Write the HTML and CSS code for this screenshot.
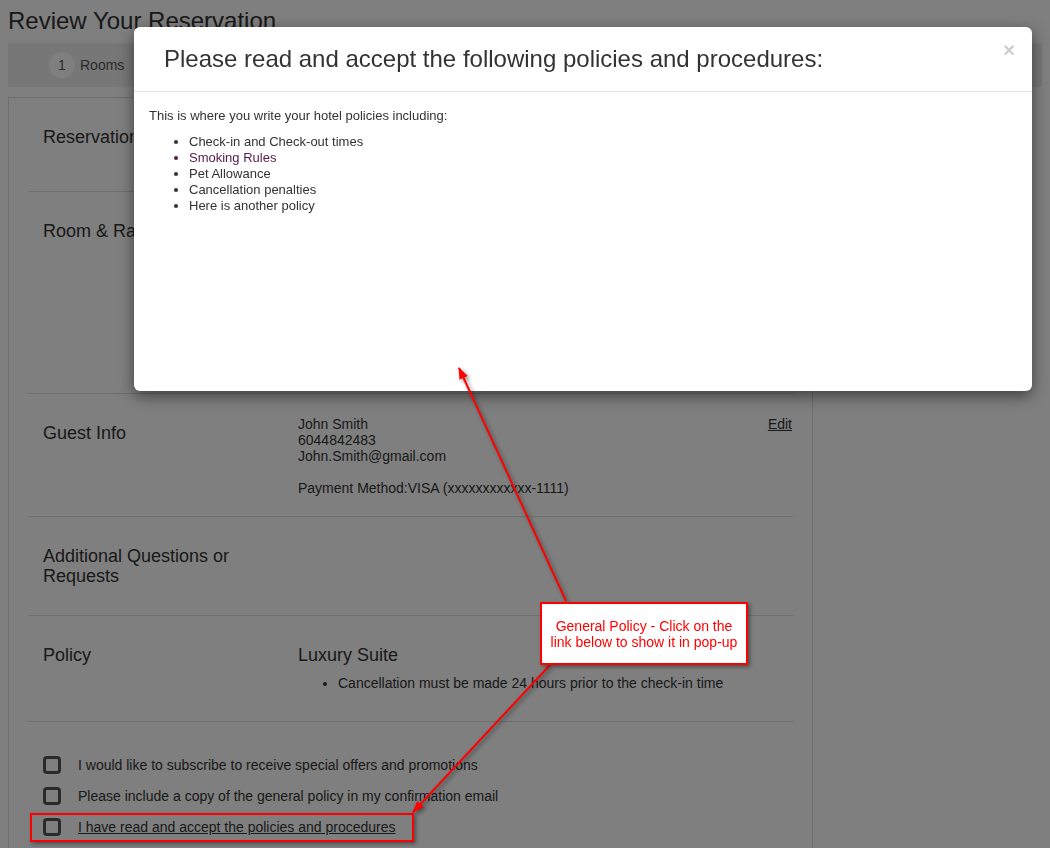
FILE: index.html
```html
<!DOCTYPE html>
<html lang="en">
<head>
  <meta charset="UTF-8" />
  <title>Review Your Reservation</title>
  <link rel="stylesheet" href="styles.css">
</head>
<body>

  <!-- page under the dialog -->
  <div class="page">
    <h1 class="page-title">Review Your Reservation</h1>

    <div class="steps">
      <div class="step"><span class="step-num">1</span><span>Rooms</span></div>
    </div>

    <div class="review">
      <div class="review-row row-summary">
        <div class="row-label">Reservation Details</div>
        <div class="row-value"></div>
      </div>

      <div class="review-row row-room">
        <div class="row-label">Room &amp; Rate</div>
        <div class="row-value"></div>
      </div>

      <div class="review-row row-guest">
        <div class="row-label">Guest Info</div>
        <div class="row-value guest-info">
          <div class="guest-lines">
            John Smith<br>
            6044842483<br>
            John.Smith@gmail.com<br>
            <br>
            Payment Method:VISA (xxxxxxxxxxxx-1111)
          </div>
          <a href="#" class="edit-link">Edit</a>
        </div>
      </div>

      <div class="review-row row-requests">
        <div class="row-label">Additional Questions or<br>Requests</div>
        <div class="row-value"></div>
      </div>

      <div class="review-row row-policy">
        <div class="row-label">Policy</div>
        <div class="row-value">
          <div class="room-name">Luxury Suite</div>
          <ul class="room-policy">
            <li>Cancellation must be made 24 hours prior to the check-in time</li>
          </ul>
        </div>
      </div>

      <div class="review-checks">
        <label class="check"><span class="check-box"></span>I would like to subscribe to receive special offers and promotions</label>
        <label class="check"><span class="check-box"></span>Please include a copy of the general policy in my confirmation email</label>
        <label class="check"><span class="check-box"></span><a href="#" class="policy-link">I have read and accept the policies and procedures</a></label>
      </div>
    </div>
  </div>

  <!-- dialog -->
  <div class="backdrop"></div>
  <div class="modal">
    <div class="modal-header">
      <h4 class="modal-title">Please read and accept the following policies and procedures:</h4>
      <button class="modal-close">&times;</button>
    </div>
    <div class="modal-body">
      <p>This is where you write your hotel policies including:</p>
      <ul>
        <li>Check-in and Check-out times</li>
        <li class="visited">Smoking Rules</li>
        <li>Pet Allowance</li>
        <li>Cancellation penalties</li>
        <li>Here is another policy</li>
      </ul>
    </div>
  </div>

  <!-- screenshot annotations -->
  <svg class="note-arrows" width="1050" height="848" viewBox="0 0 1050 848">
    <defs>
      <marker id="head" markerWidth="12" markerHeight="10" refX="11" refY="4.5" orient="auto" markerUnits="userSpaceOnUse">
        <path d="M0,0 L12,4.5 L0,9 z" fill="#ff0000" />
      </marker>
    </defs>
    <line x1="566" y1="601" x2="459" y2="368" stroke="#ff0000" stroke-width="2" marker-end="url(#head)" />
    <line x1="550" y1="665" x2="413" y2="812" stroke="#ff0000" stroke-width="2" marker-end="url(#head)" />
  </svg>
  <div class="note">General Policy - Click on the<br>link below to show it in pop-up</div>
  <div class="note-frame"></div>

</body>
</html>
```

FILE: styles.css
```css
html {
  overflow: hidden;
}

body {
  margin: 8px;
  font-family: 'Liberation Sans', Arial, sans-serif;
  color: #333;
  background: #fff;
}

.page-title {
  margin: 0 0 9px;
  font-size: 24px;
  font-weight: normal;
  line-height: 26px;
}

.steps {
  background: #eee;
  height: 44px;
  display: flex;
  align-items: center;
  padding-left: 41px;
}

.step {
  display: flex;
  align-items: center;
  gap: 5px;
  font-size: 14px;
  color: #555;
}

.step-num {
  width: 26px;
  height: 26px;
  border-radius: 50%;
  background: #fff;
  display: flex;
  align-items: center;
  justify-content: center;
}

.review {
  margin-top: 10px;
  width: 805px;
  box-sizing: border-box;
  border: 1px solid #ddd;
  padding: 0 19px;
}

.review-row {
  display: flex;
  box-sizing: border-box;
  border-bottom: 1px solid #ddd;
  padding: 22px 0 0 15px;
}

.row-summary { height: 94px; }
.row-room { height: 202px; }
.row-guest { height: 123px; }
.row-requests { height: 99px; }
.row-policy { height: 106px; }

.row-label {
  width: 255px;
  flex-shrink: 0;
  margin-top: 7px;
  font-size: 18px;
  line-height: 20px;
}

.row-value {
  flex: 1;
  font-size: 14px;
  line-height: 16px;
}

.guest-info {
  display: flex;
  justify-content: space-between;
  align-items: flex-start;
}

.edit-link {
  color: #333;
  text-decoration: underline;
  margin-right: 1px;
}

.room-name {
  margin-top: 7px;
  font-size: 18px;
  line-height: 20px;
}

.room-policy {
  margin: 10px 0 0;
  padding-left: 40px;
}

.review-checks {
  padding: 34px 0 40px 15px;
  display: flex;
  flex-direction: column;
  gap: 13px;
}

.check {
  display: flex;
  align-items: center;
  gap: 17px;
  font-size: 14px;
  line-height: 18px;
}

.check-box {
  width: 18px;
  height: 18px;
  box-sizing: border-box;
  border: 3px solid #555;
  border-radius: 4px;
  background: #fff;
}

.policy-link {
  color: #333;
  text-decoration: underline;
}

/* dialog */
.backdrop {
  position: fixed;
  inset: 0;
  background: rgba(0, 0, 0, 0.5);
}

.modal {
  position: absolute;
  left: 134px;
  top: 27px;
  width: 898px;
  height: 364px;
  background: #fff;
  border-radius: 6px;
  box-shadow: 0 5px 15px rgba(0, 0, 0, 0.5);
  overflow: hidden;
}

.modal-header {
  display: flex;
  align-items: flex-start;
  padding: 19px 17px 19px 30px;
  border-bottom: 1px solid #e5e5e5;
}

.modal-title {
  margin: 0;
  font-size: 24px;
  font-weight: normal;
  line-height: 26px;
  color: #333;
}

.modal-close {
  margin-left: auto;
  margin-top: -6px;
  padding: 0;
  border: none;
  background: none;
  font-family: 'Liberation Sans', Arial, sans-serif;
  font-size: 20px;
  font-weight: bold;
  line-height: 21px;
  color: #000;
  opacity: 0.2;
}

.modal-body {
  padding: 16px 15px;
  font-size: 13px;
  line-height: 16px;
}

.modal-body p {
  margin: 0;
}

.modal-body ul {
  margin: 10px 0 0;
  padding-left: 40px;
}

.modal-body .visited {
  color: #551a49;
}

/* annotations */
.note-arrows {
  position: absolute;
  left: 0;
  top: 0;
  filter: drop-shadow(2px 2px 2px rgba(0, 0, 0, 0.45));
}

.note {
  position: absolute;
  left: 540px;
  top: 602px;
  width: 208px;
  height: 63px;
  box-sizing: border-box;
  border: 2px solid #ff0000;
  background: #fff;
  padding-top: 14px;
  font-size: 14px;
  line-height: 16px;
  color: #ff0000;
  text-align: center;
  box-shadow: 2px 2px 4px rgba(0, 0, 0, 0.4);
}

.note-frame {
  position: absolute;
  left: 30px;
  top: 813px;
  width: 384px;
  height: 29px;
  box-sizing: border-box;
  border: 2px solid #ff0000;
  box-shadow: 2px 2px 4px rgba(0, 0, 0, 0.4);
}
```
